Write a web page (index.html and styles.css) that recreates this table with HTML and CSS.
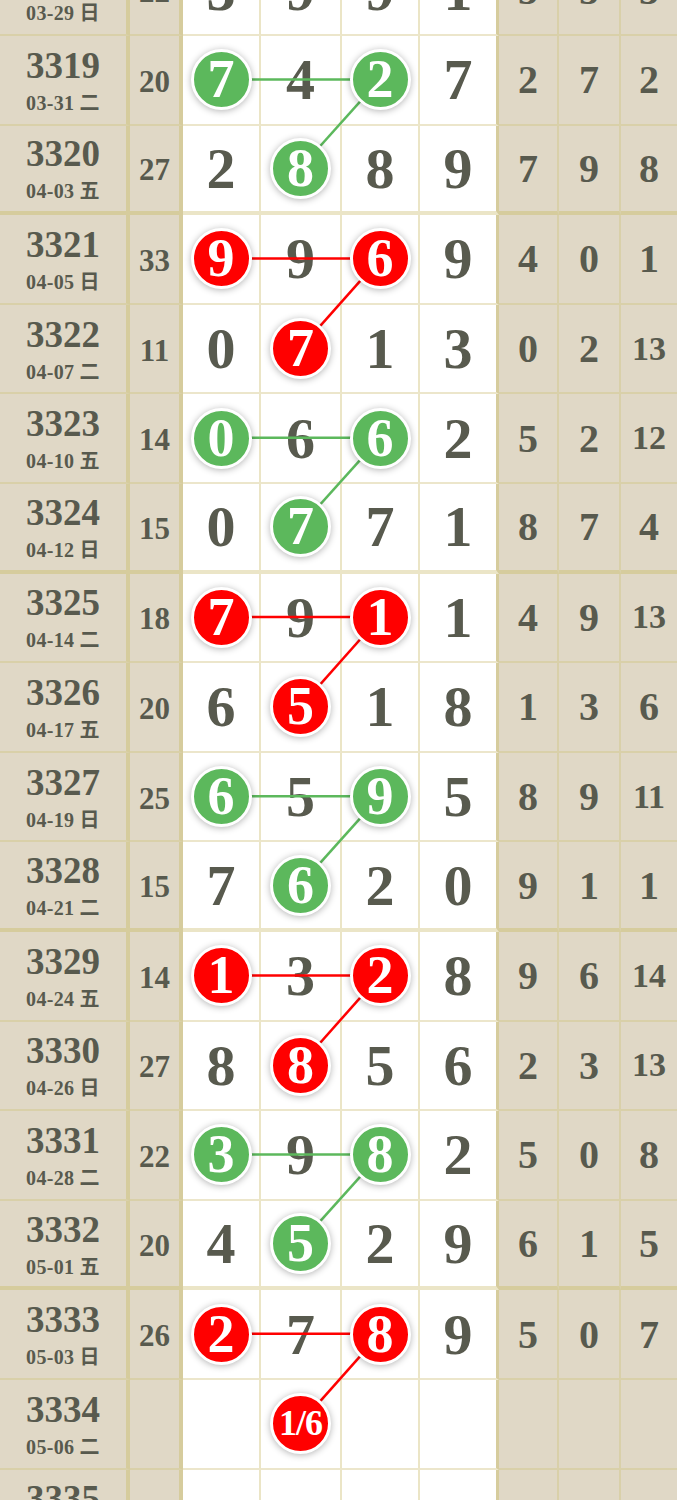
FILE: index.html
```html
<!DOCTYPE html>
<html lang="zh">
<head>
  <meta charset="UTF-8">
  <meta name="viewport" content="width=device-width, initial-scale=1.0">
  <title>走势图</title>
  <link rel="stylesheet" href="styles.css">
</head>
<body>
  <div class="chart">
    <div class="row">
      <div class="c-issue"><span class="issue">3318</span><span class="date">03-29 日</span></div>
      <div class="c-sum">22</div>
      <div class="c-num">3</div><div class="c-num">9</div><div class="c-num">9</div><div class="c-num">1</div>
      <div class="c-tail">3</div><div class="c-tail">5</div><div class="c-tail">3</div>
    </div>
    <div class="row">
      <div class="c-issue"><span class="issue">3319</span><span class="date">03-31 二</span></div>
      <div class="c-sum">20</div>
      <div class="c-num"><span class="ball g">7</span></div><div class="c-num">4</div><div class="c-num"><span class="ball g">2</span></div><div class="c-num">7</div>
      <div class="c-tail">2</div><div class="c-tail">7</div><div class="c-tail">2</div>
    </div>
    <div class="row end">
      <div class="c-issue"><span class="issue">3320</span><span class="date">04-03 五</span></div>
      <div class="c-sum">27</div>
      <div class="c-num">2</div><div class="c-num"><span class="ball g">8</span></div><div class="c-num">8</div><div class="c-num">9</div>
      <div class="c-tail">7</div><div class="c-tail">9</div><div class="c-tail">8</div>
    </div>
    <div class="row">
      <div class="c-issue"><span class="issue">3321</span><span class="date">04-05 日</span></div>
      <div class="c-sum">33</div>
      <div class="c-num"><span class="ball r">9</span></div><div class="c-num">9</div><div class="c-num"><span class="ball r">6</span></div><div class="c-num">9</div>
      <div class="c-tail">4</div><div class="c-tail">0</div><div class="c-tail">1</div>
    </div>
    <div class="row">
      <div class="c-issue"><span class="issue">3322</span><span class="date">04-07 二</span></div>
      <div class="c-sum">11</div>
      <div class="c-num">0</div><div class="c-num"><span class="ball r">7</span></div><div class="c-num">1</div><div class="c-num">3</div>
      <div class="c-tail">0</div><div class="c-tail">2</div><div class="c-tail wide">13</div>
    </div>
    <div class="row">
      <div class="c-issue"><span class="issue">3323</span><span class="date">04-10 五</span></div>
      <div class="c-sum">14</div>
      <div class="c-num"><span class="ball g">0</span></div><div class="c-num">6</div><div class="c-num"><span class="ball g">6</span></div><div class="c-num">2</div>
      <div class="c-tail">5</div><div class="c-tail">2</div><div class="c-tail wide">12</div>
    </div>
    <div class="row end">
      <div class="c-issue"><span class="issue">3324</span><span class="date">04-12 日</span></div>
      <div class="c-sum">15</div>
      <div class="c-num">0</div><div class="c-num"><span class="ball g">7</span></div><div class="c-num">7</div><div class="c-num">1</div>
      <div class="c-tail">8</div><div class="c-tail">7</div><div class="c-tail">4</div>
    </div>
    <div class="row">
      <div class="c-issue"><span class="issue">3325</span><span class="date">04-14 二</span></div>
      <div class="c-sum">18</div>
      <div class="c-num"><span class="ball r">7</span></div><div class="c-num">9</div><div class="c-num"><span class="ball r">1</span></div><div class="c-num">1</div>
      <div class="c-tail">4</div><div class="c-tail">9</div><div class="c-tail wide">13</div>
    </div>
    <div class="row">
      <div class="c-issue"><span class="issue">3326</span><span class="date">04-17 五</span></div>
      <div class="c-sum">20</div>
      <div class="c-num">6</div><div class="c-num"><span class="ball r">5</span></div><div class="c-num">1</div><div class="c-num">8</div>
      <div class="c-tail">1</div><div class="c-tail">3</div><div class="c-tail">6</div>
    </div>
    <div class="row">
      <div class="c-issue"><span class="issue">3327</span><span class="date">04-19 日</span></div>
      <div class="c-sum">25</div>
      <div class="c-num"><span class="ball g">6</span></div><div class="c-num">5</div><div class="c-num"><span class="ball g">9</span></div><div class="c-num">5</div>
      <div class="c-tail">8</div><div class="c-tail">9</div><div class="c-tail wide">11</div>
    </div>
    <div class="row end">
      <div class="c-issue"><span class="issue">3328</span><span class="date">04-21 二</span></div>
      <div class="c-sum">15</div>
      <div class="c-num">7</div><div class="c-num"><span class="ball g">6</span></div><div class="c-num">2</div><div class="c-num">0</div>
      <div class="c-tail">9</div><div class="c-tail">1</div><div class="c-tail">1</div>
    </div>
    <div class="row">
      <div class="c-issue"><span class="issue">3329</span><span class="date">04-24 五</span></div>
      <div class="c-sum">14</div>
      <div class="c-num"><span class="ball r">1</span></div><div class="c-num">3</div><div class="c-num"><span class="ball r">2</span></div><div class="c-num">8</div>
      <div class="c-tail">9</div><div class="c-tail">6</div><div class="c-tail wide">14</div>
    </div>
    <div class="row">
      <div class="c-issue"><span class="issue">3330</span><span class="date">04-26 日</span></div>
      <div class="c-sum">27</div>
      <div class="c-num">8</div><div class="c-num"><span class="ball r">8</span></div><div class="c-num">5</div><div class="c-num">6</div>
      <div class="c-tail">2</div><div class="c-tail">3</div><div class="c-tail wide">13</div>
    </div>
    <div class="row">
      <div class="c-issue"><span class="issue">3331</span><span class="date">04-28 二</span></div>
      <div class="c-sum">22</div>
      <div class="c-num"><span class="ball g">3</span></div><div class="c-num">9</div><div class="c-num"><span class="ball g">8</span></div><div class="c-num">2</div>
      <div class="c-tail">5</div><div class="c-tail">0</div><div class="c-tail">8</div>
    </div>
    <div class="row end">
      <div class="c-issue"><span class="issue">3332</span><span class="date">05-01 五</span></div>
      <div class="c-sum">20</div>
      <div class="c-num">4</div><div class="c-num"><span class="ball g">5</span></div><div class="c-num">2</div><div class="c-num">9</div>
      <div class="c-tail">6</div><div class="c-tail">1</div><div class="c-tail">5</div>
    </div>
    <div class="row">
      <div class="c-issue"><span class="issue">3333</span><span class="date">05-03 日</span></div>
      <div class="c-sum">26</div>
      <div class="c-num"><span class="ball r">2</span></div><div class="c-num">7</div><div class="c-num"><span class="ball r">8</span></div><div class="c-num">9</div>
      <div class="c-tail">5</div><div class="c-tail">0</div><div class="c-tail">7</div>
    </div>
    <div class="row">
      <div class="c-issue"><span class="issue">3334</span><span class="date">05-06 二</span></div>
      <div class="c-sum"></div>
      <div class="c-num"></div><div class="c-num"><span class="ball r small">1/6</span></div><div class="c-num"></div><div class="c-num"></div>
      <div class="c-tail"></div><div class="c-tail"></div><div class="c-tail"></div>
    </div>
    <div class="row">
      <div class="c-issue"><span class="issue">3335</span><span class="date">05-08 五</span></div>
      <div class="c-sum"></div>
      <div class="c-num"></div><div class="c-num"></div><div class="c-num"></div><div class="c-num"></div>
      <div class="c-tail"></div><div class="c-tail"></div><div class="c-tail"></div>
    </div>

    <!-- connecting lines, drawn between ball centres -->
    <svg class="links" width="677" height="1612.8" viewBox="0 0 677 1612.8">
      <g stroke="#5cb85c" stroke-width="2.5">
        <line x1="221" y1="133.4" x2="380" y2="133.4"/>
        <line x1="380" y1="133.4" x2="300.5" y2="222"/>
        <line x1="221" y1="491.8" x2="380" y2="491.8"/>
        <line x1="380" y1="491.8" x2="300.5" y2="580.4"/>
        <line x1="221" y1="850.2" x2="380" y2="850.2"/>
        <line x1="380" y1="850.2" x2="300.5" y2="938.8"/>
        <line x1="221" y1="1208.6" x2="380" y2="1208.6"/>
        <line x1="380" y1="1208.6" x2="300.5" y2="1297.2"/>
      </g>
      <g stroke="#f00" stroke-width="2.5">
        <line x1="221" y1="312.6" x2="380" y2="312.6"/>
        <line x1="380" y1="312.6" x2="300.5" y2="402.2"/>
        <line x1="221" y1="671" x2="380" y2="671"/>
        <line x1="380" y1="671" x2="300.5" y2="760.6"/>
        <line x1="221" y1="1029.4" x2="380" y2="1029.4"/>
        <line x1="380" y1="1029.4" x2="300.5" y2="1119"/>
        <line x1="221" y1="1387.8" x2="380" y2="1387.8"/>
        <line x1="380" y1="1387.8" x2="300.5" y2="1477.4"/>
      </g>
    </svg>
  </div>
</body>
</html>
```

FILE: styles.css
```css
body {
  margin: 0;
  background: #fff;
  font-family: "Liberation Serif", "Noto Sans CJK SC", serif;
  font-weight: bold;
  color: #585a4e;
  overflow: hidden;
}

.chart {
  position: relative;
  width: 677px;
  margin-top: -53.6px;
}

.row {
  display: grid;
  grid-template-columns: 130px 53px 78px 81px 78px 79px 60px 62px 56px;
  height: 89.6px;
}

.row > div {
  box-sizing: border-box;
  display: flex;
  align-items: center;
  justify-content: center;
  border-bottom: 2px solid #ece6cb;
}

.c-issue,
.c-sum,
.c-tail {
  background: #e0d8c6;
}

.row > .c-issue,
.row > .c-sum,
.row > .c-tail {
  border-bottom-color: #d9d0a9;
}

.row.end > div {
  border-bottom-width: 4px;
  border-bottom-color: #ebe5c7;
}

.row.end > .c-issue,
.row.end > .c-sum,
.row.end > .c-tail {
  border-bottom-color: #d6cc9d;
}

.c-issue {
  flex-direction: column;
  border-right: 4px solid #d6cc9d;
  padding-top: 4px;
}

.issue {
  font-size: 37px;
  line-height: 34px;
}

.date {
  font-size: 20px;
  line-height: 24px;
  margin-top: 8px;
  letter-spacing: 0.3px;
}

.c-sum {
  font-size: 31px;
  border-right: 4px solid #d6cc9d;
  padding-top: 4px;
}

.c-num {
  font-size: 58px;
  border-right: 2px solid #ebe5c6;
}

.row > .c-num:nth-child(6) {
  border-right: 3px solid #d6cc9d;
}

.c-tail {
  font-size: 40px;
  border-right: 2px solid #d9d0a9;
}

.c-tail.wide {
  font-size: 34px;
}

.row > .c-tail:last-child {
  border-right: none;
}

.ball {
  position: relative;
  z-index: 2;
  width: 55px;
  height: 55px;
  border: 3px solid #fff;
  border-radius: 50%;
  box-shadow: 0 1px 7px rgba(0, 0, 0, 0.3);
  color: #fff;
  font-size: 54px;
  line-height: 55px;
  display: flex;
  align-items: center;
  justify-content: center;
}

.ball.g {
  background: #5cb85c;
}

.ball.r {
  background: #f00;
}

.ball.small {
  font-size: 36px;
  letter-spacing: -1px;
}

.links {
  position: absolute;
  top: 0;
  left: 0;
  z-index: 1;
  pointer-events: none;
}
```
